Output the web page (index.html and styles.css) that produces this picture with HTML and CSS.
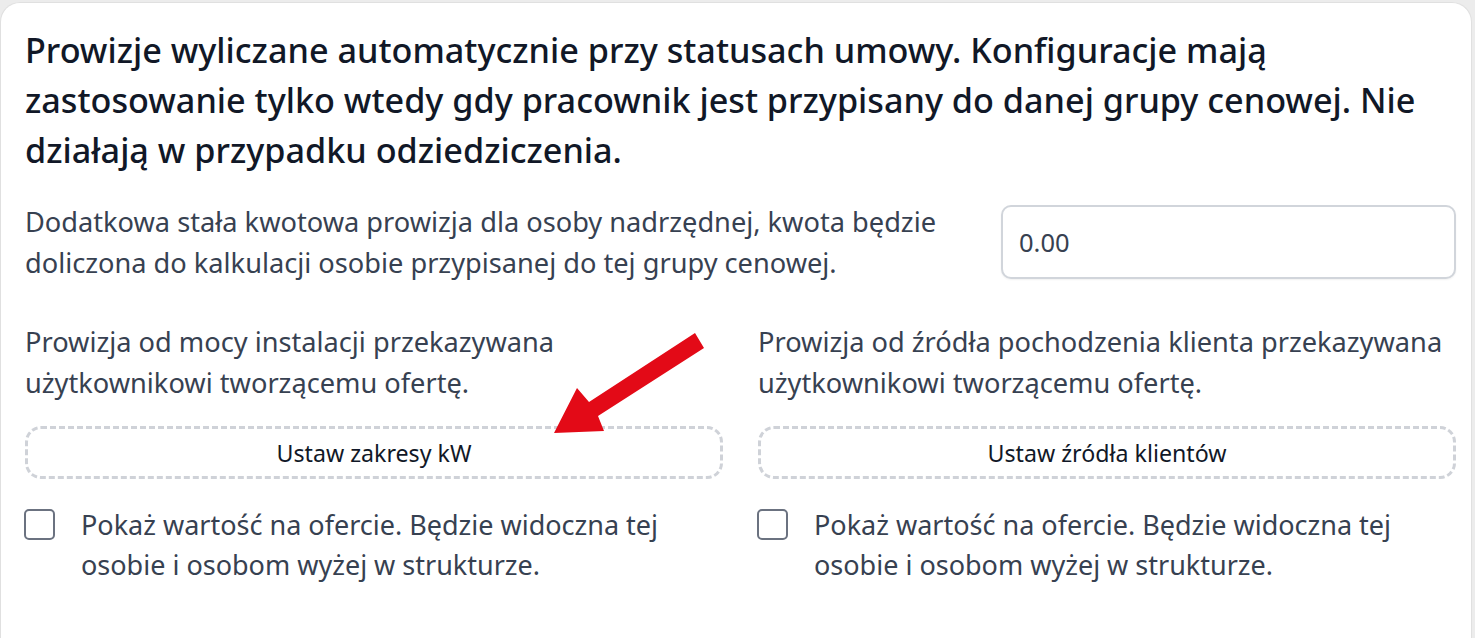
FILE: index.html
```html
<!DOCTYPE html>
<html lang="pl">
<head>
<meta charset="utf-8">
<title>Prowizje</title>
<link rel="stylesheet" href="styles.css">
</head>
<body>
<div class="page">
  <div class="card">
    <h2 class="title">Prowizje wyliczane automatycznie przy statusach umowy. Konfiguracje mają zastosowanie tylko wtedy gdy pracownik jest przypisany do danej grupy cenowej. Nie działają w przypadku odziedziczenia.</h2>

    <div class="fixed-row">
      <p class="desc">Dodatkowa stała kwotowa prowizja dla osoby nadrzędnej, kwota będzie doliczona do kalkulacji osobie przypisanej do tej grupy cenowej.</p>
      <input class="amount" type="text" value="0.00">
    </div>

    <div class="columns">
      <div class="col">
        <p class="desc">Prowizja od mocy instalacji przekazywana użytkownikowi tworzącemu ofertę.</p>
        <button class="dashed-btn" type="button">Ustaw zakresy kW</button>
        <label class="check">
          <span class="box"></span>
          <span class="check-text">Pokaż wartość na ofercie. Będzie widoczna tej osobie i osobom wyżej w strukturze.</span>
        </label>
      </div>
      <div class="col">
        <p class="desc">Prowizja od źródła pochodzenia klienta przekazywana użytkownikowi tworzącemu ofertę.</p>
        <button class="dashed-btn" type="button">Ustaw źródła klientów</button>
        <label class="check">
          <span class="box"></span>
          <span class="check-text">Pokaż wartość na ofercie. Będzie widoczna tej osobie i osobom wyżej w strukturze.</span>
        </label>
      </div>
    </div>
  </div>

  <svg class="arrow" width="1475" height="638" viewBox="0 0 1475 638" aria-hidden="true">
    <polygon points="695,333 704,348 598,416 604,431 554,433 577,388 589,402" fill="#e30a17"/>
  </svg>
</div>
</body>
</html>
```
FILE: styles.css
```css
html, body {
  margin: 0;
  padding: 0;
  background: #ececec;
  height: 100%;
  overflow: hidden;
}

body {
  font-family: "Noto Sans", "Open Sans", sans-serif;
}

.page {
  position: relative;
  height: 100%;
  padding: 2px 3px 0 0;
  box-sizing: border-box;
}

.card {
  background: #ffffff;
  border: 1px solid #e0e0e0;
  border-bottom: none;
  border-radius: 20px 20px 0 0;
  height: 100%;
  box-sizing: border-box;
  padding: 22px 15px 0 24px;
}

.title {
  margin: 0;
  font-size: 34.2px;
  line-height: 50px;
  font-weight: 500;
  color: #111827;
}

.desc {
  margin: 0;
  font-size: 27.2px;
  line-height: 41px;
  color: #374151;
}

.fixed-row {
  display: flex;
  align-items: center;
  gap: 35px;
  margin-top: 26px;
}

.fixed-row .desc {
  flex: 1;
}

.amount {
  width: 455px;
  height: 74px;
  box-sizing: border-box;
  border: 2px solid #d1d5db;
  border-radius: 10px;
  box-shadow: 0 1px 2px rgba(0, 0, 0, 0.06);
  padding: 0 16px;
  font-family: inherit;
  font-size: 25.5px;
  color: #374151;
  outline: none;
}

.columns {
  display: grid;
  grid-template-columns: 1fr 1fr;
  gap: 35px;
  margin-top: 38px;
}

.col {
  display: flex;
  flex-direction: column;
}

.dashed-btn {
  margin-top: 23px;
  height: 53px;
  box-sizing: border-box;
  border: 3px dashed #cfd2d8;
  border-radius: 16px;
  background: #ffffff;
  font-family: inherit;
  font-size: 23.2px;
  line-height: 30px;
  color: #111827;
  cursor: pointer;
}

.check {
  display: flex;
  align-items: flex-start;
  gap: 26px;
  margin-top: 26px;
  cursor: pointer;
}

.box {
  flex: none;
  width: 31px;
  height: 31px;
  box-sizing: border-box;
  margin-top: 4px;
  margin-left: -1px;
  border: 2px solid #6b7280;
  border-radius: 5px;
  background: #ffffff;
}

.check-text {
  font-size: 27px;
  line-height: 40px;
  color: #374151;
}

.arrow {
  position: absolute;
  left: 0;
  top: 0;
  pointer-events: none;
}
```
